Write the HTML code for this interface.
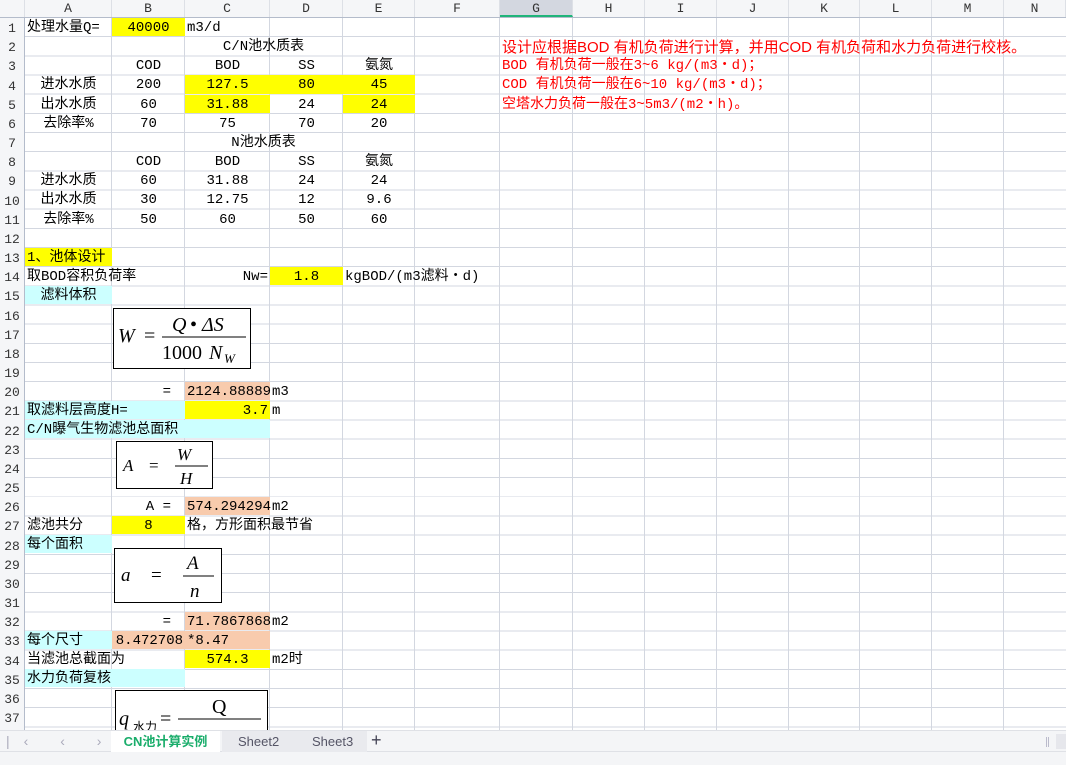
<!DOCTYPE html>
<html><head><meta charset="utf-8"><style>
*{margin:0;padding:0;box-sizing:border-box}
body{width:1066px;height:765px;overflow:hidden;background:#fff;position:relative;font-family:"Liberation Mono","Noto Sans CJK SC",monospace;font-size:14px;color:#000}
#hdr{position:absolute;left:0;top:0;width:1066px;height:18px;background:#f5f6f8;border-bottom:1px solid #b4bccb}
.ch{position:absolute;top:0;height:17px;line-height:17px;text-align:center;font-size:13px;color:#333;border-right:1px solid #dde0e6}
#rh{position:absolute;left:0;top:18px;width:25px;height:712px;background:#f5f6f8;border-right:1px solid #b4bccb}
.rn{position:absolute;left:0;width:24px;font-size:13px;color:#333;text-align:center;line-height:21px}
#g{position:absolute;left:25px;top:18px;width:1041px;height:712px;display:grid;
grid-template-columns:87px 73px 85px 73px 72px 85px 73px 72px 72px 72px 71px 72px 72px 72px;
grid-template-rows:repeat(38,19.17px);
background:repeating-linear-gradient(to bottom,transparent 0 18.17px,#d3d7e0 18.17px 19.17px)}
.vl{position:absolute;top:18px;height:712px;width:1px;background:#d3d7e0}
.c{white-space:nowrap;line-height:21px;padding:0 2px;overflow:visible;position:relative;z-index:2;height:18.17px}
.ctr{text-align:center}.r{text-align:right}
.y{background:#ffff00}.o{background:#f8cbad}.cy{background:#ccffff}
.red{color:#f00}
.box{position:absolute;border:1px solid #000;background:#fff;z-index:3;font-family:"Liberation Serif",serif}
</style></head><body>
<div id="hdr">
<div class="ch" style="left:0;width:25px"></div>
<div class="ch" style="left:25px;width:87px">A</div>
<div class="ch" style="left:112px;width:73px">B</div>
<div class="ch" style="left:185px;width:85px">C</div>
<div class="ch" style="left:270px;width:73px">D</div>
<div class="ch" style="left:343px;width:72px">E</div>
<div class="ch" style="left:415px;width:85px">F</div>
<div class="ch" style="left:500px;width:73px;background:#d3d7e0;border-bottom:2px solid #1fb47a">G</div>
<div class="ch" style="left:573px;width:72px">H</div>
<div class="ch" style="left:645px;width:72px">I</div>
<div class="ch" style="left:717px;width:72px">J</div>
<div class="ch" style="left:789px;width:71px">K</div>
<div class="ch" style="left:860px;width:72px">L</div>
<div class="ch" style="left:932px;width:72px">M</div>
<div class="ch" style="left:1004px;width:62px">N</div>
</div>
<div id="rh">
<div class="rn" style="top:0">1</div><div class="rn" style="top:19.17px">2</div><div class="rn" style="top:38.34px">3</div><div class="rn" style="top:57.51px">4</div><div class="rn" style="top:76.68px">5</div><div class="rn" style="top:95.85px">6</div><div class="rn" style="top:115.02px">7</div><div class="rn" style="top:134.19px">8</div><div class="rn" style="top:153.36px">9</div><div class="rn" style="top:172.53px">10</div><div class="rn" style="top:191.7px">11</div><div class="rn" style="top:210.87px">12</div><div class="rn" style="top:230.04px">13</div><div class="rn" style="top:249.21px">14</div><div class="rn" style="top:268.38px">15</div><div class="rn" style="top:287.55px">16</div><div class="rn" style="top:306.72px">17</div><div class="rn" style="top:325.89px">18</div><div class="rn" style="top:345.06px">19</div><div class="rn" style="top:364.23px">20</div><div class="rn" style="top:383.4px">21</div><div class="rn" style="top:402.57px">22</div><div class="rn" style="top:421.74px">23</div><div class="rn" style="top:440.91px">24</div><div class="rn" style="top:460.08px">25</div><div class="rn" style="top:479.25px">26</div><div class="rn" style="top:498.42px">27</div><div class="rn" style="top:517.59px">28</div><div class="rn" style="top:536.76px">29</div><div class="rn" style="top:555.93px">30</div><div class="rn" style="top:575.1px">31</div><div class="rn" style="top:594.27px">32</div><div class="rn" style="top:613.44px">33</div><div class="rn" style="top:632.61px">34</div><div class="rn" style="top:651.78px">35</div><div class="rn" style="top:670.95px">36</div><div class="rn" style="top:690.12px">37</div><div class="rn" style="top:709.29px">38</div>
</div>
<div class="vl" style="left:111px"></div><div class="vl" style="left:184px"></div><div class="vl" style="left:269px"></div><div class="vl" style="left:342px"></div><div class="vl" style="left:414px"></div><div class="vl" style="left:499px"></div><div class="vl" style="left:572px"></div><div class="vl" style="left:644px"></div><div class="vl" style="left:716px"></div><div class="vl" style="left:788px"></div><div class="vl" style="left:859px"></div><div class="vl" style="left:931px"></div><div class="vl" style="left:1003px"></div>
<div id="g">
<div class="c" style="grid-area:1/1">处理水量Q=</div>
<div class="c y ctr" style="grid-area:1/2">40000</div>
<div class="c" style="grid-area:1/3">m3/d</div>
<div class="c ctr" style="grid-area:2/2/3/6">C/N池水质表</div>
<div class="c ctr" style="grid-area:3/2">COD</div><div class="c ctr" style="grid-area:3/3">BOD</div><div class="c ctr" style="grid-area:3/4">SS</div><div class="c ctr" style="grid-area:3/5">氨氮</div>
<div class="c ctr" style="grid-area:4/1">进水水质</div><div class="c ctr" style="grid-area:4/2">200</div><div class="c ctr y" style="grid-area:4/3">127.5</div><div class="c ctr y" style="grid-area:4/4">80</div><div class="c ctr y" style="grid-area:4/5">45</div>
<div class="c ctr" style="grid-area:5/1">出水水质</div><div class="c ctr" style="grid-area:5/2">60</div><div class="c ctr y" style="grid-area:5/3">31.88</div><div class="c ctr" style="grid-area:5/4">24</div><div class="c ctr y" style="grid-area:5/5">24</div>
<div class="c ctr" style="grid-area:6/1">去除率%</div><div class="c ctr" style="grid-area:6/2">70</div><div class="c ctr" style="grid-area:6/3">75</div><div class="c ctr" style="grid-area:6/4">70</div><div class="c ctr" style="grid-area:6/5">20</div>
<div class="c ctr" style="grid-area:7/2/8/6">N池水质表</div>
<div class="c ctr" style="grid-area:8/2">COD</div><div class="c ctr" style="grid-area:8/3">BOD</div><div class="c ctr" style="grid-area:8/4">SS</div><div class="c ctr" style="grid-area:8/5">氨氮</div>
<div class="c ctr" style="grid-area:9/1">进水水质</div><div class="c ctr" style="grid-area:9/2">60</div><div class="c ctr" style="grid-area:9/3">31.88</div><div class="c ctr" style="grid-area:9/4">24</div><div class="c ctr" style="grid-area:9/5">24</div>
<div class="c ctr" style="grid-area:10/1">出水水质</div><div class="c ctr" style="grid-area:10/2">30</div><div class="c ctr" style="grid-area:10/3">12.75</div><div class="c ctr" style="grid-area:10/4">12</div><div class="c ctr" style="grid-area:10/5">9.6</div>
<div class="c ctr" style="grid-area:11/1">去除率%</div><div class="c ctr" style="grid-area:11/2">50</div><div class="c ctr" style="grid-area:11/3">60</div><div class="c ctr" style="grid-area:11/4">50</div><div class="c ctr" style="grid-area:11/5">60</div>
<div class="c y" style="grid-area:13/1">1、池体设计</div>
<div class="c" style="grid-area:14/1">取BOD容积负荷率</div>
<div class="c r" style="grid-area:14/3">Nw=</div>
<div class="c y ctr" style="grid-area:14/4">1.8</div>
<div class="c" style="grid-area:14/5">kgBOD/(m3滤料・d)</div>
<div class="c cy ctr" style="grid-area:15/1">滤料体积</div>
<div class="c r" style="grid-area:20/2;padding-right:14px">=</div>
<div class="c o r" style="grid-area:20/3">2124.88889</div>
<div class="c" style="grid-area:20/4">m3</div>
<div class="c cy" style="grid-area:21/1/22/3">取滤料层高度H=</div>
<div class="c y r" style="grid-area:21/3">3.7</div>
<div class="c" style="grid-area:21/4">m</div>
<div class="c cy" style="grid-area:22/1/23/4">C/N曝气生物滤池总面积</div>
<div class="c r" style="grid-area:26/2;padding-right:14px">A =</div>
<div class="c o r" style="grid-area:26/3">574.294294</div>
<div class="c" style="grid-area:26/4">m2</div>
<div class="c" style="grid-area:27/1">滤池共分</div>
<div class="c y ctr" style="grid-area:27/2">8</div>
<div class="c" style="grid-area:27/3">格，方形面积最节省</div>
<div class="c cy" style="grid-area:28/1">每个面积</div>
<div class="c r" style="grid-area:32/2;padding-right:14px">=</div>
<div class="c o r" style="grid-area:32/3">71.7867868</div>
<div class="c" style="grid-area:32/4">m2</div>
<div class="c cy" style="grid-area:33/1">每个尺寸</div>
<div class="c o r" style="grid-area:33/2">8.472708</div>
<div class="c o" style="grid-area:33/3">*8.47</div>
<div class="c" style="grid-area:34/1">当滤池总截面为</div>
<div class="c y ctr" style="grid-area:34/3">574.3</div>
<div class="c" style="grid-area:34/4">m2时</div>
<div class="c cy" style="grid-area:35/1/36/3">水力负荷复核</div>
<div class="c red" style="grid-area:2/7;font-family:'Liberation Sans','Noto Sans CJK SC',sans-serif;font-size:15px;line-height:22px">设计应根据BOD 有机负荷进行计算，并用COD 有机负荷和水力负荷进行校核。</div>
<div class="c red" style="grid-area:3/7">BOD 有机负荷一般在3~6 kg/(m3・d)；</div>
<div class="c red" style="grid-area:4/7">COD 有机负荷一般在6~10 kg/(m3・d)；</div>
<div class="c red" style="grid-area:5/7">空塔水力负荷一般在3~5m3/(m2・h)。</div>
</div>
<div class="box" style="left:113px;top:308px;width:138px;height:61px">
<svg width="136" height="59"><g font-family="Liberation Serif,serif" font-size="20"><text x="4" y="33" font-style="italic">W</text><text x="30" y="33">=</text><text x="58" y="22" font-style="italic">Q</text><text x="76" y="22">•</text><text x="88" y="22" font-style="italic">ΔS</text><line x1="48" y1="28" x2="132" y2="28" stroke="#000"/><text x="48" y="50">1000</text><text x="95" y="50" font-style="italic">N</text><text x="110" y="54" font-size="13" font-style="italic">W</text></g></svg></div>
<div class="box" style="left:116px;top:441px;width:97px;height:48px">
<svg width="95" height="46"><g font-family="Liberation Serif,serif" font-size="17" font-style="italic"><text x="6" y="29">A</text><text x="32" y="29" font-style="normal">=</text><text x="60" y="18">W</text><line x1="58" y1="24" x2="91" y2="24" stroke="#000"/><text x="63" y="42">H</text></g></svg></div>
<div class="box" style="left:114px;top:548px;width:108px;height:55px">
<svg width="106" height="53"><g font-family="Liberation Serif,serif" font-size="19" font-style="italic"><text x="6" y="32">a</text><text x="36" y="32" font-style="normal">=</text><text x="72" y="20">A</text><line x1="68" y1="27" x2="99" y2="27" stroke="#000"/><text x="75" y="48">n</text></g></svg></div>
<div class="box" style="left:115px;top:690px;width:153px;height:42px;overflow:hidden">
<svg width="151" height="40"><g font-family="Liberation Serif,serif" font-size="20"><text x="3" y="34" font-style="italic">q</text><text x="17" y="40" font-size="12" font-family="Noto Sans CJK SC,sans-serif">水力</text><text x="44" y="34">=</text><text x="96" y="22">Q</text><line x1="62" y1="28" x2="145" y2="28" stroke="#000"/></g></svg></div>
<div style="position:absolute;left:0;top:730px;width:1066px;height:22px;background:#f4f5f7;border-top:1px solid #dfe1e6;border-bottom:1px solid #dfe1e6;z-index:5">
<div style="position:absolute;left:6px;top:2px;color:#aab;font-size:14px;letter-spacing:14px;font-family:'Liberation Sans',sans-serif">|‹ ‹ › ›|</div>
<div style="position:absolute;left:111px;top:0;width:109px;height:21px;background:#fff;color:#1aad6b;font-weight:bold;font-size:13px;text-align:center;line-height:21px;font-family:'Liberation Sans','Noto Sans CJK SC',sans-serif">CN池计算实例</div>
<div style="position:absolute;left:222px;top:0;width:145px;height:21px;background:#e9eaee"></div>
<div style="position:absolute;left:238px;top:0;line-height:21px;font-size:13px;color:#556;font-family:'Liberation Sans',sans-serif">Sheet2</div>
<div style="position:absolute;left:312px;top:0;line-height:21px;font-size:13px;color:#556;font-family:'Liberation Sans',sans-serif">Sheet3</div>
<div style="position:absolute;left:371px;top:-1px;line-height:21px;font-size:18px;color:#445;font-family:'Liberation Sans',sans-serif">+</div>
<div style="position:absolute;left:1046px;top:6px;width:3px;height:10px;border-left:1px solid #bbc;border-right:1px solid #bbc"></div>
<div style="position:absolute;left:1056px;top:3px;width:10px;height:15px;background:#e6e7ec"></div>
</div>
<div style="position:absolute;left:0;top:752px;width:1066px;height:13px;background:#f4f5f7;z-index:5"></div>
</body></html>
